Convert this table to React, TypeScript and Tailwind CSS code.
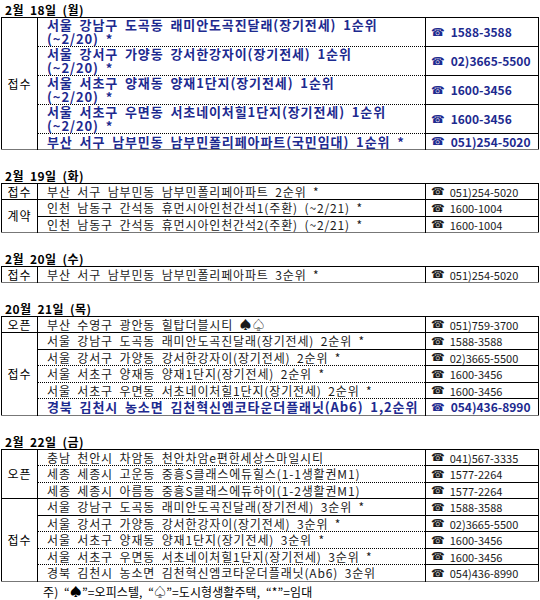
import React from "react";

type Row = { text: string; sub?: string; phone: string; bold?: boolean };
type Group = { label: string; rows: Row[] };
type Section = { title: string; groups: Group[] };

const sections: Section[] = [
  {
    title: "2월 18일 (월)",
    groups: [
      {
        label: "접수",
        rows: [
          { text: "서울 강남구 도곡동 래미안도곡진달래(장기전세) 1순위", sub: "(~2/20) *", phone: "1588-3588", bold: true },
          { text: "서울 강서구 가양동 강서한강자이(장기전세) 1순위", sub: "(~2/20) *", phone: "02)3665-5500", bold: true },
          { text: "서울 서초구 양재동 양재1단지(장기전세) 1순위", sub: "(~2/20) *", phone: "1600-3456", bold: true },
          { text: "서울 서초구 우면동 서초네이처힐1단지(장기전세) 1순위", sub: "(~2/20) *", phone: "1600-3456", bold: true },
          { text: "부산 서구 남부민동 남부민폴리페아파트(국민임대) 1순위 *", phone: "051)254-5020", bold: true },
        ],
      },
    ],
  },
  {
    title: "2월 19일 (화)",
    groups: [
      { label: "접수", rows: [{ text: "부산 서구 남부민동 남부민폴리페아파트 2순위 *", phone: "051)254-5020" }] },
      {
        label: "계약",
        rows: [
          { text: "인천 남동구 간석동 휴먼시아인천간석1(주환) (~2/21) *", phone: "1600-1004" },
          { text: "인천 남동구 간석동 휴먼시아인천간석2(주환) (~2/21) *", phone: "1600-1004" },
        ],
      },
    ],
  },
  {
    title: "2월 20일 (수)",
    groups: [{ label: "접수", rows: [{ text: "부산 서구 남부민동 남부민폴리페아파트 3순위 *", phone: "051)254-5020" }] }],
  },
  {
    title: "20월 21일 (목)",
    groups: [
      { label: "오픈", rows: [{ text: "부산 수영구 광안동 힐탑더블시티 ♠♤", phone: "051)759-3700" }] },
      {
        label: "접수",
        rows: [
          { text: "서울 강남구 도곡동 래미안도곡진달래(장기전세) 2순위 *", phone: "1588-3588" },
          { text: "서울 강서구 가양동 강서한강자이(장기전세) 2순위 *", phone: "02)3665-5500" },
          { text: "서울 서초구 양재동 양재1단지(장기전세) 2순위 *", phone: "1600-3456" },
          { text: "서울 서초구 우면동 서초네이처힐1단지(장기전세) 2순위 *", phone: "1600-3456" },
          { text: "경북 김천시 농소면 김천혁신엠코타운더플래닛(Ab6) 1,2순위", phone: "054)436-8990", bold: true },
        ],
      },
    ],
  },
  {
    title: "2월 22일 (금)",
    groups: [
      {
        label: "오픈",
        rows: [
          { text: "충남 천안시 차암동 천안차암e편한세상스마일시티", phone: "041)567-3335" },
          { text: "세종 세종시 고운동 중흥S클래스에듀힐스(1-1생활권M1)", phone: "1577-2264" },
          { text: "세종 세종시 아름동 중흥S클래스에듀하이(1-2생활권M1)", phone: "1577-2264" },
        ],
      },
      {
        label: "접수",
        rows: [
          { text: "서울 강남구 도곡동 래미안도곡진달래(장기전세) 3순위 *", phone: "1588-3588" },
          { text: "서울 강서구 가양동 강서한강자이(장기전세) 3순위 *", phone: "02)3665-5500" },
          { text: "서울 서초구 양재동 양재1단지(장기전세) 3순위 *", phone: "1600-3456" },
          { text: "서울 서초구 우면동 서초네이처힐1단지(장기전세) 3순위 *", phone: "1600-3456" },
          { text: "경북 김천시 농소면 김천혁신엠코타운더플래닛(Ab6) 3순위", phone: "054)436-8990" },
        ],
      },
    ],
  },
];

const Phone = ({ n, bold }: { n: string; bold?: boolean }) => (
  <span className={`flex items-center ${bold ? "gap-[6px] text-[12px]" : "gap-[5px] text-[11px]"}`}>
    <span className="font-['DejaVu_Sans',sans-serif] text-[11px] leading-none">☎</span>
    <span>{n}</span>
  </span>
);

const Schedule = ({ s }: { s: Section }) => {
  let idx = 0;
  return (
    <div className="mt-[18px] first:mt-[2px]">
      <div className="h-[15px] pl-[4px] text-[12px] leading-[15px] font-bold tracking-[0.4px] [word-spacing:3px]">
        {s.title}
      </div>
      <table className="w-[538px] border-collapse border border-black border-b-[#777] table-fixed">
        <colgroup>
          <col className="w-[36px]" />
          <col />
          <col className="w-[113px]" />
        </colgroup>
        <tbody>
          {s.groups.map((g, gi) =>
            g.rows.map((r, ri) => {
              const top = gi > 0 && ri === 0 ? "border-t border-solid border-black" : "";
              const line = ri < g.rows.length - 1 ? "border-b border-dotted border-black" : "";
              const style = r.bold
                ? "font-bold text-[13px] text-[#1d2a8f] tracking-[0.9px]"
                : "text-[12px] text-[#1a1a1a] tracking-[0.85px]";
              const h = r.sub ? "h-[29px]" : idx++ % 2 === 0 ? "h-[16px]" : "h-[17px]";
              return (
                <tr key={gi + "-" + ri} className={h}>
                  {ri === 0 && (
                    <td
                      rowSpan={g.rows.length}
                      className={`p-0 border-r border-black text-center text-[12px] leading-[14px] tracking-[1px] ${top}`}
                    >
                      {g.label}
                    </td>
                  )}
                  <td className={`p-0 pl-[9px] whitespace-nowrap leading-[14px] [word-spacing:3px] ${style} ${top} ${line}`}>
                    <div>{r.text}</div>
                    {r.sub && <div>{r.sub}</div>}
                  </td>
                  <td
                    className={`p-0 pl-[5px] border-l border-solid border-black leading-[14px] ${style} !tracking-normal ${top} ${line}`}
                  >
                    <Phone n={r.phone} bold={r.bold} />
                  </td>
                </tr>
              );
            })
          )}
        </tbody>
      </table>
    </div>
  );
};

export default function App() {
  return (
    <div className="w-[540px] h-[600px] bg-white text-black font-['Noto_Sans_CJK_KR',sans-serif] pl-[1px] overflow-hidden">
      {sections.map((s) => (
        <Schedule key={s.title} s={s} />
      ))}
      <div className="pl-[42px] pt-[3px] text-[12px] leading-[14px] tracking-[0.1px] [word-spacing:3px]">
        주) “♠”=오피스텔, “♤”=도시형생활주택, “*”=임대
      </div>
    </div>
  );
}
